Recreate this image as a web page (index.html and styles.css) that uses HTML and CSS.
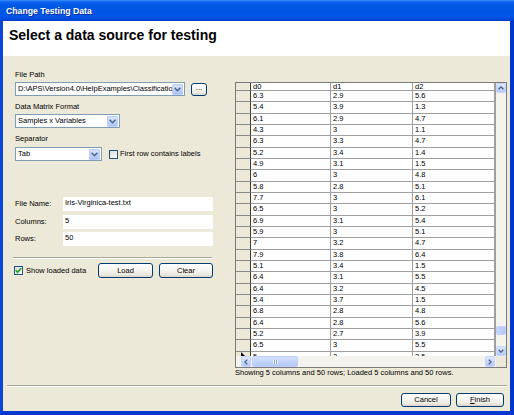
FILE: index.html
```html
<!DOCTYPE html>
<html>
<head>
<meta charset="utf-8">
<link rel="stylesheet" href="styles.css">
</head>
<body>
<div class="window">
  <div class="titlebar">Change Testing Data</div>
  <div class="frame">
    <div class="header"><h1>Select a data source for testing</h1></div>
    <div class="content">
      <div class="left">
        <div class="label">File Path</div>
        <div class="line">
          <div class="combo combo-path">
            <span class="combo-text">D:\APS\Version4.0\HelpExamples\Classification\Iris</span>
            <span class="drop"><svg width="7" height="5" viewBox="0 0 7 5"><polyline points="0.6,0.8 3.5,3.7 6.4,0.8" fill="none" stroke="#4d6185" stroke-width="1.4"/></svg></span>
          </div>
          <div class="btn btn-browse">...</div>
        </div>
        <div class="label gap">Data Matrix Format</div>
        <div class="line">
          <div class="combo combo-fmt">
            <span class="combo-text">Samples x Variables</span>
            <span class="drop"><svg width="7" height="5" viewBox="0 0 7 5"><polyline points="0.6,0.8 3.5,3.7 6.4,0.8" fill="none" stroke="#4d6185" stroke-width="1.4"/></svg></span>
          </div>
        </div>
        <div class="label gap label-sep">Separator</div>
        <div class="line">
          <div class="combo combo-sep">
            <span class="combo-text">Tab</span>
            <span class="drop"><svg width="7" height="5" viewBox="0 0 7 5"><polyline points="0.6,0.8 3.5,3.7 6.4,0.8" fill="none" stroke="#4d6185" stroke-width="1.4"/></svg></span>
          </div>
          <span class="chk chk-first"></span>
          <span class="chk-label">First row contains labels</span>
        </div>

        <div class="fields">
          <div class="field"><span class="field-label">File Name:</span><div class="tb">Iris-Virginica-test.txt</div></div>
          <div class="field"><span class="field-label">Columns:</span><div class="tb">5</div></div>
          <div class="field"><span class="field-label">Rows:</span><div class="tb">50</div></div>
        </div>
        <div class="hsep"></div>
        <div class="actions">
          <span class="chk chk-on"><svg width="7" height="7" viewBox="0 0 7 7"><polyline points="0.8,3.2 2.6,5.2 6.2,1.2" fill="none" stroke="#21a121" stroke-width="1.6"/></svg></span>
          <span class="chk-label">Show loaded data</span>
          <div class="btn btn-load">Load</div>
          <div class="btn btn-clear">Clear</div>
        </div>
      </div>

      <div class="right">
        <div class="grid">
          <div class="grid-main">
            <div class="table">
              <div class="row head"><div class="c rh"></div><div class="c">d0</div><div class="c">d1</div><div class="c">d2</div><div class="c fill"></div></div>
              <div class="row"><div class="c rh"></div><div class="c">6.3</div><div class="c">2.9</div><div class="c">5.6</div><div class="c fill"></div></div>
              <div class="row"><div class="c rh"></div><div class="c">5.4</div><div class="c">3.9</div><div class="c">1.3</div><div class="c fill"></div></div>
              <div class="row"><div class="c rh"></div><div class="c">6.1</div><div class="c">2.9</div><div class="c">4.7</div><div class="c fill"></div></div>
              <div class="row"><div class="c rh"></div><div class="c">4.3</div><div class="c">3</div><div class="c">1.1</div><div class="c fill"></div></div>
              <div class="row"><div class="c rh"></div><div class="c">6.3</div><div class="c">3.3</div><div class="c">4.7</div><div class="c fill"></div></div>
              <div class="row"><div class="c rh"></div><div class="c">5.2</div><div class="c">3.4</div><div class="c">1.4</div><div class="c fill"></div></div>
              <div class="row"><div class="c rh"></div><div class="c">4.9</div><div class="c">3.1</div><div class="c">1.5</div><div class="c fill"></div></div>
              <div class="row"><div class="c rh"></div><div class="c">6</div><div class="c">3</div><div class="c">4.8</div><div class="c fill"></div></div>
              <div class="row"><div class="c rh"></div><div class="c">5.8</div><div class="c">2.8</div><div class="c">5.1</div><div class="c fill"></div></div>
              <div class="row"><div class="c rh"></div><div class="c">7.7</div><div class="c">3</div><div class="c">6.1</div><div class="c fill"></div></div>
              <div class="row"><div class="c rh"></div><div class="c">6.5</div><div class="c">3</div><div class="c">5.2</div><div class="c fill"></div></div>
              <div class="row"><div class="c rh"></div><div class="c">6.9</div><div class="c">3.1</div><div class="c">5.4</div><div class="c fill"></div></div>
              <div class="row"><div class="c rh"></div><div class="c">5.9</div><div class="c">3</div><div class="c">5.1</div><div class="c fill"></div></div>
              <div class="row"><div class="c rh"></div><div class="c">7</div><div class="c">3.2</div><div class="c">4.7</div><div class="c fill"></div></div>
              <div class="row"><div class="c rh"></div><div class="c">7.9</div><div class="c">3.8</div><div class="c">6.4</div><div class="c fill"></div></div>
              <div class="row"><div class="c rh"></div><div class="c">5.1</div><div class="c">3.4</div><div class="c">1.5</div><div class="c fill"></div></div>
              <div class="row"><div class="c rh"></div><div class="c">6.4</div><div class="c">3.1</div><div class="c">5.5</div><div class="c fill"></div></div>
              <div class="row"><div class="c rh"></div><div class="c">6.4</div><div class="c">3.2</div><div class="c">4.5</div><div class="c fill"></div></div>
              <div class="row"><div class="c rh"></div><div class="c">5.4</div><div class="c">3.7</div><div class="c">1.5</div><div class="c fill"></div></div>
              <div class="row"><div class="c rh"></div><div class="c">6.8</div><div class="c">2.8</div><div class="c">4.8</div><div class="c fill"></div></div>
              <div class="row"><div class="c rh"></div><div class="c">6.4</div><div class="c">2.8</div><div class="c">5.6</div><div class="c fill"></div></div>
              <div class="row"><div class="c rh"></div><div class="c">5.2</div><div class="c">2.7</div><div class="c">3.9</div><div class="c fill"></div></div>
              <div class="row"><div class="c rh"></div><div class="c">6.5</div><div class="c">3</div><div class="c">5.5</div><div class="c fill"></div></div>
              <div class="row"><div class="c rh"><span class="cur"></span></div><div class="c">5</div><div class="c">2</div><div class="c">3.5</div><div class="c fill"></div></div>
            </div>
            <div class="vscroll">
              <div class="sbtn sbtn-up"><svg width="6" height="4" viewBox="0 0 6 4"><polyline points="0.6,3.3 3,0.9 5.4,3.3" fill="none" stroke="#4d6185" stroke-width="1.3"/></svg></div>
              <div class="track"></div>
              <div class="thumb thumb-v"></div>
              <div class="vgap"></div>
              <div class="sbtn sbtn-down"><svg width="6" height="4" viewBox="0 0 6 4"><polyline points="0.6,0.7 3,3.1 5.4,0.7" fill="none" stroke="#4d6185" stroke-width="1.3"/></svg></div>
            </div>
          </div>
          <div class="grid-bottom">
            <div class="hscroll">
              <div class="hpad"></div>
              <div class="sbtn sbtn-left"><svg width="4" height="6" viewBox="0 0 4 6"><polyline points="3.3,0.6 0.9,3 3.3,5.4" fill="none" stroke="#4d6185" stroke-width="1.3"/></svg></div>
              <div class="thumb thumb-h"><span class="grip"></span></div>
              <div class="track"></div>
              <div class="sbtn sbtn-right"><svg width="4" height="6" viewBox="0 0 4 6"><polyline points="0.7,0.6 3.1,3 0.7,5.4" fill="none" stroke="#4d6185" stroke-width="1.3"/></svg></div>
            </div>
            <div class="corner"></div>
          </div>
        </div>
        <div class="status">Showing 5 columns and 50 rows; Loaded 5 columns and 50 rows.</div>
      </div>
    </div>
    <div class="footer">
      <div class="fsep"></div>
      <div class="footer-btns">
        <div class="btn btn-cancel">Cancel</div>
        <div class="btn btn-finish"><span class="u">F</span>inish</div>
      </div>
    </div>
  </div>
</div>
</body>
</html>
```
FILE: styles.css
```css
html, body {
  margin: 0;
  padding: 0;
}
body {
  width: 514px;
  height: 415px;
  overflow: hidden;
  background: #ece9d8;
  font-family: "Liberation Sans", Arial, sans-serif;
  font-size: 7.5px;
  color: #000;
}
.window {
  width: 514px;
  height: 415px;
  display: flex;
  flex-direction: column;
}
.titlebar {
  flex: none;
  height: 21px;
  box-sizing: border-box;
  padding-left: 6px;
  color: #fff;
  font-weight: bold;
  font-size: 8.7px;
  line-height: 23px;
  text-shadow: 1px 1px 0 #0c2d9a;
  background: linear-gradient(to bottom, #3d8ef6 0px, #0b63ef 2px, #0259e8 5px, #0054e3 11px, #0056ea 16px, #004adb 19px, #003ecf 21px);
}
.frame {
  flex: 1;
  min-height: 0;
  display: flex;
  flex-direction: column;
  background: #ece9d8;
  border-left: 3px solid #0a46d9;
  border-right: 4px solid #0036cc;
  border-bottom: 4px solid #0538d0;
}
.header {
  flex: none;
  height: 35px;
  box-sizing: border-box;
  padding: 6px 0 0 6px;
  background: #fff;
}
.header h1 {
  margin: 0;
  font-size: 14px;
  line-height: 16px;
  font-weight: bold;
}
.content {
  flex: none;
  height: 329px;
  box-sizing: border-box;
  padding-top: 14px;
  display: flex;
}
.left {
  width: 198px;
  margin-left: 12px;
  display: flex;
  flex-direction: column;
}
.label {
  height: 10px;
  line-height: 10px;
  margin-bottom: 2px;
  white-space: nowrap;
}
.label.gap {
  margin-top: 6px;
}
.label.label-sep {
  margin-bottom: 3px;
}
.line {
  display: flex;
  align-items: center;
  height: 14px;
}
.combo {
  box-sizing: border-box;
  height: 14px;
  border: 1px solid #7f9db9;
  background: #fff;
  display: flex;
  align-items: center;
  padding: 0 1px 0 2px;
}
.combo-text {
  flex: 1;
  min-width: 0;
  overflow: hidden;
  white-space: nowrap;
  line-height: 10px;
}
.drop {
  flex: none;
  width: 11px;
  height: 11px;
  box-sizing: border-box;
  border: 1px solid #bccdf6;
  border-radius: 1px;
  background: linear-gradient(to bottom, #d9e4fd, #bcd0f8 60%, #aec4f4);
  display: flex;
  align-items: center;
  justify-content: center;
}
.combo-path { width: 170px; }
.combo-fmt { width: 105px; }
.combo-sep { width: 87px; }
.btn {
  box-sizing: border-box;
  border: 1px solid #003c74;
  border-radius: 3px;
  background: linear-gradient(to bottom, #ffffff 0%, #f6f5f0 45%, #ebe9e1 80%, #d8d3c6 100%);
  display: flex;
  align-items: center;
  justify-content: center;
  white-space: nowrap;
  line-height: 10px;
}
.btn-browse {
  width: 16px;
  height: 13px;
  margin-left: 6px;
  padding-bottom: 2px;
}
.chk {
  flex: none;
  box-sizing: border-box;
  width: 9px;
  height: 9px;
  border: 1px solid #1c5180;
  background: linear-gradient(135deg, #dcdcd7, #fbfbf9);
  display: flex;
  align-items: center;
  justify-content: center;
}
.chk-first {
  margin-left: 7px;
}
.chk-label {
  margin-left: 2px;
  white-space: nowrap;
  line-height: 10px;
}
.fields {
  margin-top: 36px;
  display: flex;
  flex-direction: column;
  gap: 3.5px;
}
.field {
  display: flex;
  align-items: center;
  height: 14px;
}
.field-label {
  width: 48px;
  line-height: 10px;
}
.tb {
  box-sizing: border-box;
  width: 150px;
  height: 14px;
  background: #fff;
  padding: 1px 0 0 2px;
  line-height: 10px;
  white-space: nowrap;
}
.hsep {
  margin: 11px 0 0 -2px;
  width: 199px;
  height: 0;
  border-top: 1px solid #aca899;
  border-bottom: 1px solid #fff;
}
.actions {
  margin-top: 4px;
  height: 15px;
  display: flex;
  align-items: center;
}
.actions .chk {
  margin-left: -1px;
}
.actions .chk-label {
  margin-left: 3px;
}
.btn-load {
  margin-left: auto;
  width: 55px;
  height: 15px;
}
.btn-clear {
  margin-left: 6px;
  width: 54px;
  height: 15px;
}
.right {
  margin-left: 22px;
  width: 272px;
  display: flex;
  flex-direction: column;
}
.grid {
  margin-top: 12px;
  box-sizing: border-box;
  width: 272px;
  height: 286px;
  border: 1px solid #7a7a7a;
  display: flex;
  flex-direction: column;
  background: #fff;
}
.grid-main {
  height: 273px;
  display: flex;
}
.table {
  width: 260px;
  height: 273px;
  overflow: hidden;
  display: flex;
  flex-direction: column;
}
.row {
  flex: none;
  display: grid;
  grid-template-columns: 15px 80px 82px 82px 1px;
  height: 11.34px;
}
.row.head {
  height: 8px;
}
.c {
  box-sizing: border-box;
  border-right: 1px solid #a0a0a0;
  border-bottom: 1px solid #a0a0a0;
  padding-left: 2px;
  line-height: 9px;
  overflow: hidden;
  white-space: nowrap;
  background: #fff;
}
.head .c {
  line-height: 8px;
}
.c.rh {
  background: #ece9d8;
  border-right: 1px solid #3c3c3c;
  border-bottom: 1px solid #8a8a8a;
  padding-left: 5px;
}
.c.fill {
  padding: 0;
  border-right: none;
  background: #a0a0a0;
}
.cur {
  display: block;
  width: 0;
  height: 0;
  margin-top: 0px;
  border-left: 4px solid #000;
  border-top: 4px solid transparent;
  border-bottom: 4px solid transparent;
}
.vscroll {
  width: 10px;
  display: flex;
  flex-direction: column;
  background: #f4f3ee;
}
.track {
  flex: 1;
  background: #f4f3ee;
}
.sbtn {
  flex: none;
  box-sizing: border-box;
  border: 1px solid #c3d3fd;
  border-radius: 2px;
  background: linear-gradient(to bottom, #e1eafe, #c6d6fc 55%, #b7caf6);
  display: flex;
  align-items: center;
  justify-content: center;
}
.sbtn-up, .sbtn-down {
  width: 10px;
  height: 10px;
}
.thumb {
  flex: none;
  box-sizing: border-box;
  border: 1px solid #c0d0fa;
  border-radius: 2px;
  background: linear-gradient(to right, #c9d8fc, #bccefa 50%, #b5c8f7);
}
.thumb-v {
  height: 9px;
}
.vgap {
  flex: none;
  height: 11px;
}
.grid-bottom {
  height: 11px;
  display: flex;
  background: #ece9d8;
}
.hscroll {
  width: 260px;
  display: flex;
  background: #f4f3ee;
}
.hpad {
  width: 5px;
}
.sbtn-left, .sbtn-right {
  width: 10px;
  height: 11px;
}
.sbtn-right {
  margin-right: 1px;
}
.thumb-h {
  margin-left: 1px;
  width: 46px;
  height: 11px;
  background: linear-gradient(to bottom, #d3e0fd, #c2d3fc 55%, #b6c9f7);
  display: flex;
  align-items: center;
  justify-content: center;
}
.grip {
  width: 5px;
  height: 4px;
  background: repeating-linear-gradient(to right, #eef3fe 0, #eef3fe 1px, #8ca6e6 1px, #8ca6e6 2px);
}
.corner {
  flex: 1;
  background: #ece9d8;
}
.status {
  line-height: 10px;
  white-space: nowrap;
}
.footer {
  flex: none;
}
.fsep {
  margin: 0 3px 0 4px;
  height: 0;
  border-top: 1px solid #aca899;
  border-bottom: 1px solid #fff;
}
.footer-btns {
  margin-top: 6px;
  padding-right: 6px;
  display: flex;
  justify-content: flex-end;
  gap: 5px;
}
.btn-cancel {
  width: 50px;
  height: 14px;
}
.btn-finish {
  width: 48px;
  height: 14px;
}
.u {
  text-decoration: underline;
}
```
